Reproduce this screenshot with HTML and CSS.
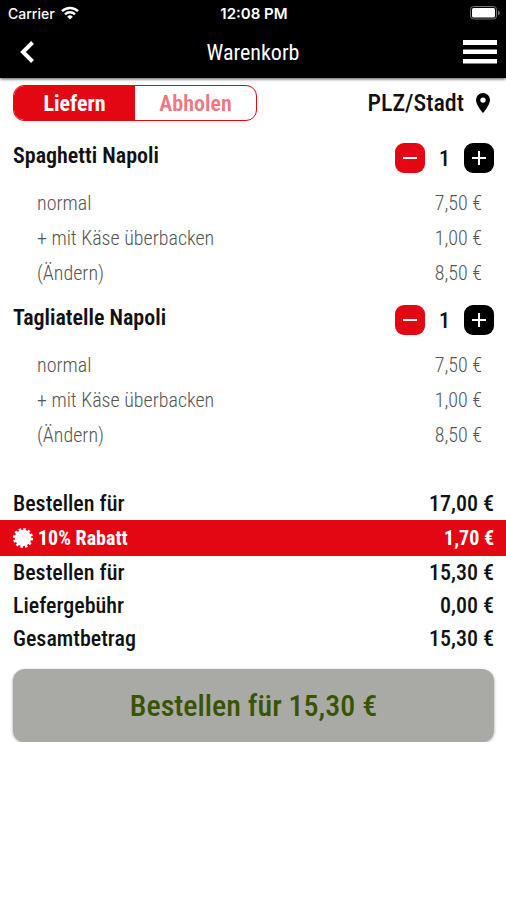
FILE: index.html
```html
<!DOCTYPE html>
<html lang="de">
<head>
    <meta charset="UTF-8">
    <meta name="viewport" content="width=device-width, initial-scale=1.0">
    <title>Warenkorb</title>
    <link rel="stylesheet" href="styles.css">
</head>
<body>
    <!-- Header -->
    <header class="header">
        <div class="status-bar">
            <div class="carrier">
                <span>Carrier</span>
                <svg width="18" height="14" viewBox="0 0 18 14" fill="none" stroke="#fff" stroke-width="2.4" aria-hidden="true">
                    <path d="M1 5.2a11.5 11.5 0 0 1 16 0M4 8.3a7.2 7.2 0 0 1 10 0"/>
                    <path d="M9 13.5 6.2 10.7a4 4 0 0 1 5.6 0z" fill="#fff" stroke="none"/>
                </svg>
            </div>
            <span class="clock">12:08 PM</span>
            <div class="battery">
                <svg width="30" height="14" viewBox="0 0 30 14" aria-hidden="true">
                    <rect x=".5" y=".5" width="26" height="12.5" rx="3" fill="none" stroke="#777"/>
                    <rect x="2" y="2" width="23" height="9.5" rx="1.5" fill="#fff"/>
                    <path d="M28 4.5v5a2.6 2.6 0 0 0 0-5z" fill="#777"/>
                </svg>
            </div>
        </div>
        <nav class="nav-bar">
            <button class="back-btn" aria-label="Zurück">
                <svg width="14" height="22" viewBox="0 0 14 22" fill="none" stroke="#fff" stroke-width="4" aria-hidden="true">
                    <path d="M12.5 1.5 3 11l9.5 9.5"/>
                </svg>
            </button>
            <h1>Warenkorb</h1>
            <button class="menu-btn" aria-label="Menü">
                <svg width="34" height="24" viewBox="0 0 34 24" fill="#fff" aria-hidden="true">
                    <path d="M0 0h34v5H0zM0 9.500h34v4.500H0zM0 19h34v4.500H0z"/>
                </svg>
            </button>
        </nav>
    </header>

    <main>
        <!-- Delivery options -->
        <div class="options">
            <div class="segment">
                <button class="active">Liefern</button>
                <button>Abholen</button>
            </div>
            <button class="location">
                PLZ/Stadt
                <svg width="14" height="20" viewBox="0 0 14 20" aria-hidden="true">
                    <path fill="#000" fill-rule="evenodd" d="M7 0a7 7 0 0 0-7 7c0 5 7 13 7 13s7-8 7-13a7 7 0 0 0-7-7zm0 4.400a2.700 2.700 0 1 1 0 5.400 2.700 2.700 0 0 1 0-5.400z"/>
                </svg>
            </button>
        </div>

        <!-- Cart items -->
        <section class="item">
            <div class="item-head">
                <h2>Spaghetti Napoli</h2>
                <div class="counter">
                    <button class="minus" aria-label="Weniger">
                        <svg width="14" height="14" viewBox="0 0 14 14" aria-hidden="true"><path d="M0 7h14"/></svg>
                    </button>
                    <span>1</span>
                    <button class="plus" aria-label="Mehr">
                        <svg width="14" height="14" viewBox="0 0 14 14" aria-hidden="true"><path d="M0 7h14M7 0v14"/></svg>
                    </button>
                </div>
            </div>
            <ul class="details">
                <li><span>normal</span><span>7,50 €</span></li>
                <li><span>+ mit Käse überbacken</span><span>1,00 €</span></li>
                <li><a href="#">(Ändern)</a><span>8,50 €</span></li>
            </ul>
        </section>

        <section class="item">
            <div class="item-head">
                <h2>Tagliatelle Napoli</h2>
                <div class="counter">
                    <button class="minus" aria-label="Weniger">
                        <svg width="14" height="14" viewBox="0 0 14 14" aria-hidden="true"><path d="M0 7h14"/></svg>
                    </button>
                    <span>1</span>
                    <button class="plus" aria-label="Mehr">
                        <svg width="14" height="14" viewBox="0 0 14 14" aria-hidden="true"><path d="M0 7h14M7 0v14"/></svg>
                    </button>
                </div>
            </div>
            <ul class="details">
                <li><span>normal</span><span>7,50 €</span></li>
                <li><span>+ mit Käse überbacken</span><span>1,00 €</span></li>
                <li><a href="#">(Ändern)</a><span>8,50 €</span></li>
            </ul>
        </section>

        <!-- Totals -->
        <div class="totals">
            <div class="row"><span>Bestellen für</span><span>17,00 €</span></div>
            <div class="row discount">
                <span class="discount-label">
                    <svg width="20" height="20" viewBox="0 0 20 20" aria-hidden="true">
                        <circle cx="10" cy="10" r="8.300" fill="#fff"/>
                        <circle cx="10" cy="10" r="8.500" fill="none" stroke="#fff" stroke-width="3" stroke-dasharray="2.450 2"/>
                    </svg>
                    10% Rabatt
                </span>
                <span>1,70 €</span>
            </div>
            <div class="row"><span>Bestellen für</span><span>15,30 €</span></div>
            <div class="row"><span>Liefergebühr</span><span>0,00 €</span></div>
            <div class="row"><span>Gesamtbetrag</span><span>15,30 €</span></div>
        </div>

        <button class="order-btn">Bestellen für 15,30 €</button>
    </main>
</body>
</html>
```
FILE: styles.css
```css
* {
    margin: 0;
    padding: 0;
    box-sizing: border-box;
}

body {
    font-family: "Roboto Condensed", Roboto, sans-serif;
    font-size: 22px;
    font-weight: 500;
    color: #111;
    background-color: #fff;
}

button {
    font: inherit;
    color: inherit;
    background: none;
    border: none;
    cursor: pointer;
}

svg {
    display: block;
}

/* Header */
.header {
    background-color: #000;
    color: #fff;
    box-shadow: 0 1px 3px rgba(0, 0, 0, 0.7);
}

.status-bar {
    display: grid;
    grid-template-columns: 1fr auto 1fr;
    align-items: center;
    height: 26px;
    padding: 0 6px 0 8px;
    font-family: Inter, sans-serif;
    font-size: 14px;
}

.carrier {
    display: flex;
    align-items: center;
    gap: 6px;
}

.clock {
    font-size: 15px;
    font-weight: 600;
}

.battery {
    justify-self: end;
}

.nav-bar {
    display: grid;
    grid-template-columns: 1fr auto 1fr;
    align-items: center;
    height: 52px;
    padding: 0 9px;
}

.nav-bar h1 {
    font-size: 22px;
    font-weight: 400;
}

.back-btn {
    justify-self: start;
    padding: 0 11px;
}

.menu-btn {
    justify-self: end;
}

/* Delivery options */
.options {
    display: flex;
    justify-content: space-between;
    align-items: center;
    padding: 7px 16px 0 13px;
}

.segment {
    display: flex;
    width: 244px;
    height: 36px;
    border: 1px solid #e30613;
    border-radius: 11px;
    overflow: hidden;
}

.segment button {
    flex: 1;
    color: #ee7780;
    font-weight: 600;
}

.segment .active {
    background-color: #e30613;
    color: #fff;
    font-weight: 700;
}

.location {
    display: flex;
    align-items: center;
    gap: 12px;
    font-size: 24px;
}

/* Cart items */
.item {
    padding: 0 12px 0 13px;
    margin-top: 14px;
}

.options + .item {
    margin-top: 22px;
}

.item-head {
    display: flex;
    justify-content: space-between;
    height: 43px;
}

.item-head h2 {
    font-size: 22px;
    font-weight: 600;
    line-height: 26px;
}

.counter {
    display: flex;
    align-items: center;
    gap: 14px;
    height: 30px;
}

.counter button {
    display: grid;
    place-items: center;
    width: 30px;
    height: 30px;
    border-radius: 9px;
    stroke: #fff;
    stroke-width: 2;
}

.minus {
    background-color: #e30613;
}

.plus {
    background-color: #000;
}

.details {
    list-style: none;
    padding: 0 12px 0 24px;
    font-size: 20px;
    font-weight: 300;
    color: #555;
}

.details li {
    display: flex;
    justify-content: space-between;
    line-height: 35px;
}

.details a {
    color: inherit;
    text-decoration: none;
}

/* Totals */
.totals {
    margin-top: 34px;
}

.row {
    display: flex;
    justify-content: space-between;
    padding: 0 12px 0 13px;
    line-height: 33px;
}

.discount {
    background-color: #e30613;
    color: #fff;
    font-size: 20px;
    font-weight: 700;
    line-height: 36px;
}

.discount-label {
    display: flex;
    align-items: center;
    gap: 5px;
}

.order-btn {
    display: block;
    width: calc(100% - 25px);
    margin: 14px 12px 0 13px;
    padding: 19px 0;
    border-radius: 12px;
    background-color: #a9aaa5;
    box-shadow: 0 1px 3px rgba(0, 0, 0, 0.4);
    color: #375400;
    font-size: 30px;
    font-weight: 500;
    line-height: 35px;
}
```
